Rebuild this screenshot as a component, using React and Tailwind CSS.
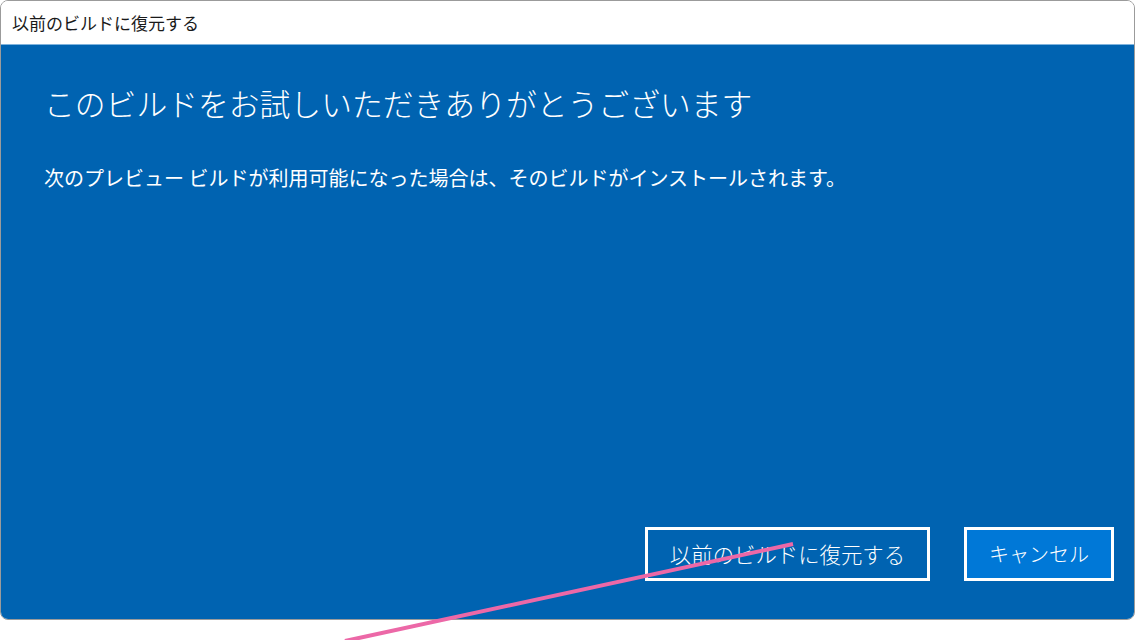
export default function App() {
    const font = { fontFamily: '"Noto Sans CJK JP", "Noto Sans", sans-serif' }

    return (
        <div className="relative w-[1137px] h-[640px] bg-white overflow-hidden" style={font}>
            <div className="w-[1135px] h-[620px] border border-[#9b9b9b] rounded-[8px] overflow-hidden flex flex-col">
                <div className="h-[44px] shrink-0 bg-white flex items-center pl-[11px] text-[17px] text-[#1a1a1a] border-b border-[#7fb3dd]">
                    以前のビルドに復元する
                </div>
                <div className="flex-1 bg-[#0063b1] text-white flex flex-col pl-[43px] pr-[20px] pt-[38px] pb-[38px]">
                    <h1 className="text-[30.8px] leading-[40px] font-light">
                        このビルドをお試しいただきありがとうございます
                    </h1>
                    <p className="mt-[41px] text-[20px] leading-[28px]">
                        次のプレビュー ビルドが利用可能になった場合は、そのビルドがインストールされます。
                    </p>
                    <div className="mt-auto flex justify-end gap-[34px]">
                        <button className="w-[285px] h-[54px] border-[3px] border-white text-[21.4px] font-light">
                            以前のビルドに復元する
                        </button>
                        <button className="w-[150px] h-[54px] border-[3px] border-white bg-[#0078d7] text-[20px] font-light">
                            キャンセル
                        </button>
                    </div>
                </div>
            </div>
            <svg className="absolute inset-0 pointer-events-none" width="1137" height="640">
                <line x1="345" y1="641" x2="793" y2="544" stroke="#ec68a7" strokeWidth="4" />
            </svg>
        </div>
    )
}
